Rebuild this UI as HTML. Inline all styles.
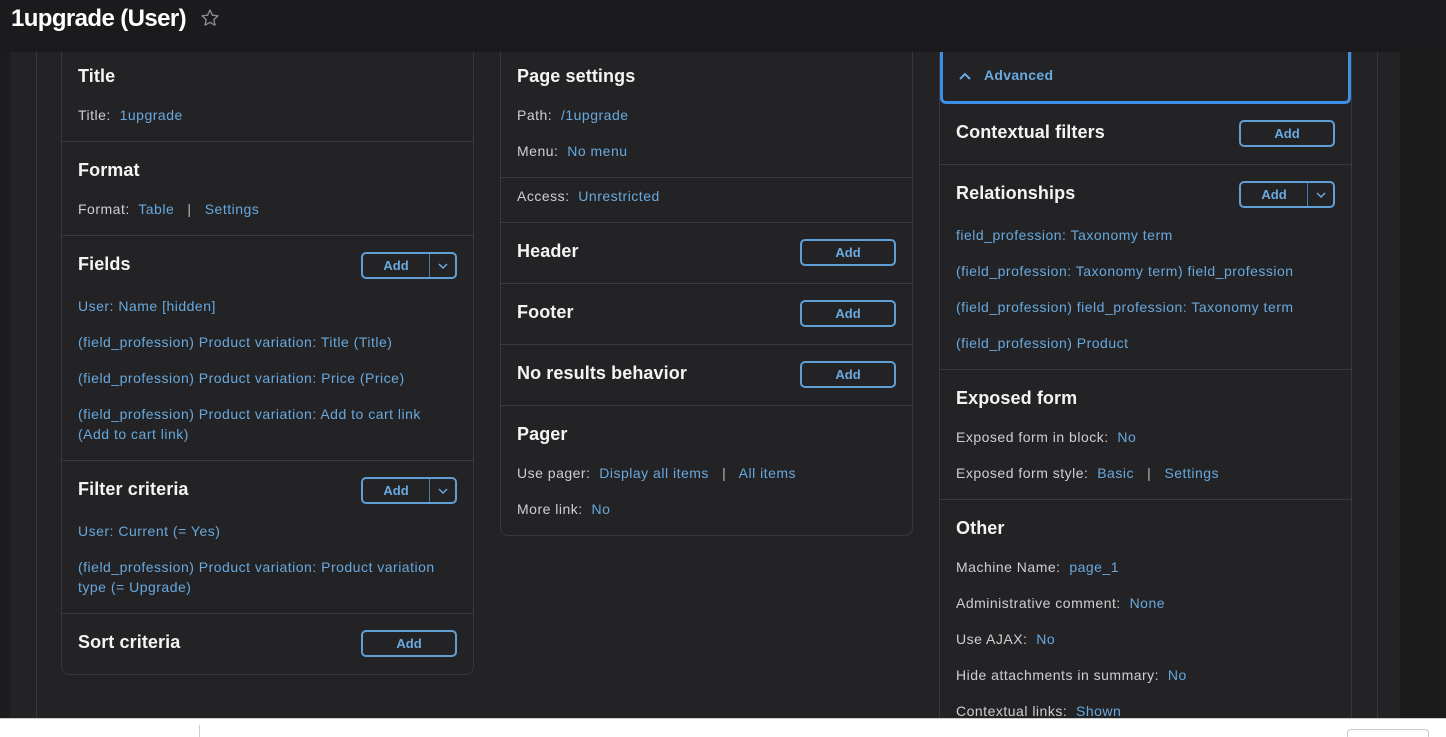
<!DOCTYPE html>
<html><head><style>
*{margin:0;padding:0;box-sizing:border-box}
html,body{width:1446px;height:737px;overflow:hidden}
body{background:#1c1c1e;font-family:"Liberation Sans",sans-serif;position:relative;color:#fff}
.a{position:absolute;white-space:nowrap}
.hd{font-size:18px;font-weight:bold;color:#f4f4f4;letter-spacing:0.1px}
.t{font-size:14px;color:#cfcfd1;letter-spacing:0.5px}
.l{color:#68a8de}
.w{white-space:normal}
.hl{position:absolute;height:1px;background:#3a3a3d}
.vl{position:absolute;width:1px;background:#38383b}
.btn{position:absolute;height:27px;border:2px solid #5f9fd6;border-radius:5px;color:#6aaae0;font-size:13px;font-weight:bold;display:flex;align-items:center}
.btn span{flex:1;text-align:center}
.btn i{width:26px;height:100%;border-left:1px solid #4a7aa6;display:flex;align-items:center;justify-content:center}
</style></head><body>
<div class="a" style="left:0;top:0;width:1446px;height:52px;background:#1b1b1d"></div>
<div class="a" style="left:11px;top:5px;font-size:24px;font-weight:bold;color:#fff;letter-spacing:-0.6px">1upgrade (User)</div>
<svg class="a" style="left:200px;top:8px" width="20" height="20" viewBox="0 0 20 20"><path d="M10 2l2.4 5.2 5.6.6-4.2 3.8 1.2 5.6L10 14.4 5 17.2l1.2-5.6L2 7.8l5.6-.6z" fill="none" stroke="#8a8a8c" stroke-width="1.4" stroke-linejoin="round"/></svg>
<div class="a" style="left:10px;top:52px;width:1390px;height:666px;background:#232325"></div>
<div class="a" style="left:1400px;top:52px;width:46px;height:666px;background:#1a1a1a"></div>
<div class="vl" style="left:36px;top:52px;height:666px"></div>
<div class="vl" style="left:1377px;top:52px;height:666px"></div>
<!-- left card -->
<div class="a" style="left:61px;top:52px;width:413px;height:623px;border:1px solid #38383b;border-top:none;border-radius:0 0 8px 8px"></div>
<div class="a hd" style="left:78px;top:66px">Title</div>
<div class="a t" style="left:78px;top:107px">Title:&nbsp; <span class="l">1upgrade</span></div>
<div class="hl" style="left:61px;top:141px;width:413px"></div>
<div class="a hd" style="left:78px;top:160px">Format</div>
<div class="a t" style="left:78px;top:201px">Format:&nbsp; <span class="l">Table</span> &nbsp;&nbsp;<span style="color:#bbb">|</span>&nbsp;&nbsp; <span class="l">Settings</span></div>
<div class="hl" style="left:61px;top:235px;width:413px"></div>
<div class="a hd" style="left:78px;top:254px">Fields</div>
<div class="btn" style="left:361px;top:252px;width:96px"><span>Add</span><i><svg width="12" height="8" viewBox="0 0 12 8"><path d="M2 2l4 4 4-4" fill="none" stroke="#6aaae0" stroke-width="1.5"/></svg></i></div>
<div class="a t l" style="left:78px;top:298px">User: Name [hidden]</div>
<div class="a t l" style="left:78px;top:334px">(field_profession) Product variation: Title (Title)</div>
<div class="a t l" style="left:78px;top:370px">(field_profession) Product variation: Price (Price)</div>
<div class="a t l w" style="left:78px;top:404px;width:370px;line-height:20px">(field_profession) Product variation: Add to cart link (Add to cart link)</div>
<div class="hl" style="left:61px;top:460px;width:413px"></div>
<div class="a hd" style="left:78px;top:479px">Filter criteria</div>
<div class="btn" style="left:361px;top:477px;width:96px"><span>Add</span><i><svg width="12" height="8" viewBox="0 0 12 8"><path d="M2 2l4 4 4-4" fill="none" stroke="#6aaae0" stroke-width="1.5"/></svg></i></div>
<div class="a t l" style="left:78px;top:523px">User: Current (= Yes)</div>
<div class="a t l w" style="left:78px;top:557px;width:372px;line-height:20px">(field_profession) Product variation: Product variation type (= Upgrade)</div>
<div class="hl" style="left:61px;top:613px;width:413px"></div>
<div class="a hd" style="left:78px;top:632px">Sort criteria</div>
<div class="btn" style="left:361px;top:630px;width:96px"><span>Add</span></div>
<!-- middle card -->
<div class="a" style="left:500px;top:52px;width:413px;height:484px;border:1px solid #38383b;border-top:none;border-radius:0 0 8px 8px"></div>
<div class="a hd" style="left:517px;top:66px">Page settings</div>
<div class="a t" style="left:517px;top:107px">Path:&nbsp; <span class="l">/1upgrade</span></div>
<div class="a t" style="left:517px;top:143px">Menu:&nbsp; <span class="l">No menu</span></div>
<div class="hl" style="left:500px;top:177px;width:413px"></div>
<div class="a t" style="left:517px;top:188px">Access:&nbsp; <span class="l">Unrestricted</span></div>
<div class="hl" style="left:500px;top:222px;width:413px"></div>
<div class="a hd" style="left:517px;top:241px">Header</div>
<div class="btn" style="left:800px;top:239px;width:96px"><span>Add</span></div>
<div class="hl" style="left:500px;top:283px;width:413px"></div>
<div class="a hd" style="left:517px;top:302px">Footer</div>
<div class="btn" style="left:800px;top:300px;width:96px"><span>Add</span></div>
<div class="hl" style="left:500px;top:344px;width:413px"></div>
<div class="a hd" style="left:517px;top:363px">No results behavior</div>
<div class="btn" style="left:800px;top:361px;width:96px"><span>Add</span></div>
<div class="hl" style="left:500px;top:405px;width:413px"></div>
<div class="a hd" style="left:517px;top:424px">Pager</div>
<div class="a t" style="left:517px;top:465px">Use pager:&nbsp; <span class="l">Display all items</span> &nbsp;&nbsp;<span style="color:#bbb">|</span>&nbsp;&nbsp; <span class="l">All items</span></div>
<div class="a t" style="left:517px;top:501px">More link:&nbsp; <span class="l">No</span></div>
<!-- right column -->
<div class="vl" style="left:939px;top:52px;height:666px"></div>
<div class="vl" style="left:1351px;top:52px;height:666px"></div>
<div class="a" style="left:940px;top:52px;width:411px;height:52px;border:3px solid #3d8fe8;border-top:none;border-radius:0 0 6px 6px"></div>
<svg class="a" style="left:958px;top:70px" width="14" height="12" viewBox="0 0 14 12"><path d="M2 9l5-5 5 5" fill="none" stroke="#6aaae0" stroke-width="2"/></svg>
<div class="a" style="left:984px;top:67px;font-size:14px;font-weight:bold;color:#6aaae0;letter-spacing:0.3px">Advanced</div>
<div class="a hd" style="left:956px;top:122px">Contextual filters</div>
<div class="btn" style="left:1239px;top:120px;width:96px"><span>Add</span></div>
<div class="hl" style="left:940px;top:164px;width:411px"></div>
<div class="a hd" style="left:956px;top:183px">Relationships</div>
<div class="btn" style="left:1239px;top:181px;width:96px"><span>Add</span><i><svg width="12" height="8" viewBox="0 0 12 8"><path d="M2 2l4 4 4-4" fill="none" stroke="#6aaae0" stroke-width="1.5"/></svg></i></div>
<div class="a t l" style="left:956px;top:227px">field_profession: Taxonomy term</div>
<div class="a t l" style="left:956px;top:263px">(field_profession: Taxonomy term) field_profession</div>
<div class="a t l" style="left:956px;top:299px">(field_profession) field_profession: Taxonomy term</div>
<div class="a t l" style="left:956px;top:335px">(field_profession) Product</div>
<div class="hl" style="left:940px;top:369px;width:411px"></div>
<div class="a hd" style="left:956px;top:388px">Exposed form</div>
<div class="a t" style="left:956px;top:429px">Exposed form in block:&nbsp; <span class="l">No</span></div>
<div class="a t" style="left:956px;top:465px">Exposed form style:&nbsp; <span class="l">Basic</span> &nbsp;&nbsp;<span style="color:#bbb">|</span>&nbsp;&nbsp; <span class="l">Settings</span></div>
<div class="hl" style="left:940px;top:499px;width:411px"></div>
<div class="a hd" style="left:956px;top:518px">Other</div>
<div class="a t" style="left:956px;top:559px">Machine Name:&nbsp; <span class="l">page_1</span></div>
<div class="a t" style="left:956px;top:595px">Administrative comment:&nbsp; <span class="l">None</span></div>
<div class="a t" style="left:956px;top:631px">Use AJAX:&nbsp; <span class="l">No</span></div>
<div class="a t" style="left:956px;top:667px">Hide attachments in summary:&nbsp; <span class="l">No</span></div>
<div class="a t" style="left:956px;top:703px">Contextual links:&nbsp; <span class="l">Shown</span></div>
<!-- bottom bar -->
<div class="a" style="left:0;top:718px;width:1446px;height:19px;background:#fff;border-top:1px solid #ccc"></div>
<div class="a" style="left:199px;top:725px;width:1px;height:12px;background:#ccc"></div>
<div class="a" style="left:1347px;top:729px;width:82px;height:8px;border:1px solid #ccc;border-bottom:none;border-radius:4px 4px 0 0"></div>
</body></html>
